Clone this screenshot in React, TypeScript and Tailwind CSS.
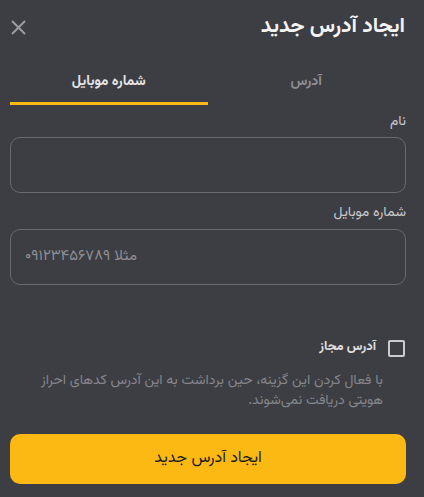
import { useState } from 'react'

const font = { fontFamily: '"Vazirmatn", "Noto Sans Arabic", "DejaVu Sans", "Noto Sans", sans-serif' }

function App() {
  const [tab, setTab] = useState<'address' | 'mobile'>('mobile')
  const [checked, setChecked] = useState(false)

  return (
    <div dir="rtl" style={font} className="w-[424px] h-[497px] bg-[#3d3e44] text-white overflow-hidden">
      {/* Header */}
      <div className="flex items-center justify-between pr-[19px] pl-[11px] pt-[11px] h-[43px]">
        <h1 className="text-[21px] font-bold text-[#f4f4f5]">ایجاد آدرس جدید</h1>
        <button className="text-[#9b9ba0]">
          <svg width="15" height="15" viewBox="0 0 15 15" fill="none" stroke="currentColor" strokeWidth="2">
            <path d="M1 1 L14 14 M14 1 L1 14" />
          </svg>
        </button>
      </div>

      {/* Tabs */}
      <div className="flex mr-[19px] ml-[10px] mt-[19px]">
        <button
          onClick={() => setTab('address')}
          className={`flex-1 h-[43px] text-[14px] font-bold border-b-[3px] ${tab === 'address' ? 'text-[#e5e5e7] border-[#fcb813]' : 'text-[#8e8f94] border-transparent'}`}
        >
          آدرس
        </button>
        <button
          onClick={() => setTab('mobile')}
          className={`flex-1 h-[43px] text-[14px] font-bold border-b-[3px] ${tab === 'mobile' ? 'text-[#e5e5e7] border-[#fcb813]' : 'text-[#8e8f94] border-transparent'}`}
        >
          شماره موبایل
        </button>
      </div>

      {/* Form */}
      <div className="pr-[18px] pl-[10px]">
        <label className="block mt-[7px] text-[14px] text-[#c9c9cd] h-[20px] leading-[20px]">نام</label>
        <div className="mt-[5px] h-[56px] rounded-[10px] border border-[#6a6b71]" />

        <label className="block mt-[10px] text-[14px] text-[#c9c9cd] h-[20px] leading-[20px]">شماره موبایل</label>
        <div dir="ltr" className="mt-[6px] h-[56px] rounded-[10px] border border-[#6a6b71] flex items-center px-[14px] text-[15px] text-[#8e8f94]">
          <span dir="rtl">مثلا ۰۹۱۲۳۴۵۶۷۸۹</span>
        </div>

        <label className="flex items-center gap-[12px] mt-[53px] h-[20px] pr-[1px] cursor-pointer" onClick={() => setChecked(!checked)}>
          <span className={`w-[17px] h-[17px] rounded-[2px] border-2 ${checked ? 'bg-[#fcb813] border-[#fcb813]' : 'border-[#c9ccd3]'}`} />
          <span className="text-[13px] font-bold text-[#e0e0e3]">آدرس مجاز</span>
        </label>
        <p className="mt-[13px] pr-[23px] text-[14px] leading-[20px] text-[#85868b]">
          با فعال کردن این گزینه، حین برداشت به این آدرس کدهای احراز هویتی دریافت نمی‌شوند.
        </p>
      </div>

      <div className="pr-[18px] pl-[10px] mt-[23px]">
        <button className="w-full h-[50px] rounded-[10px] bg-[#fcb813] text-[#1c1c1e] text-[16px]">
          ایجاد آدرس جدید
        </button>
      </div>
    </div>
  )
}

export default App
